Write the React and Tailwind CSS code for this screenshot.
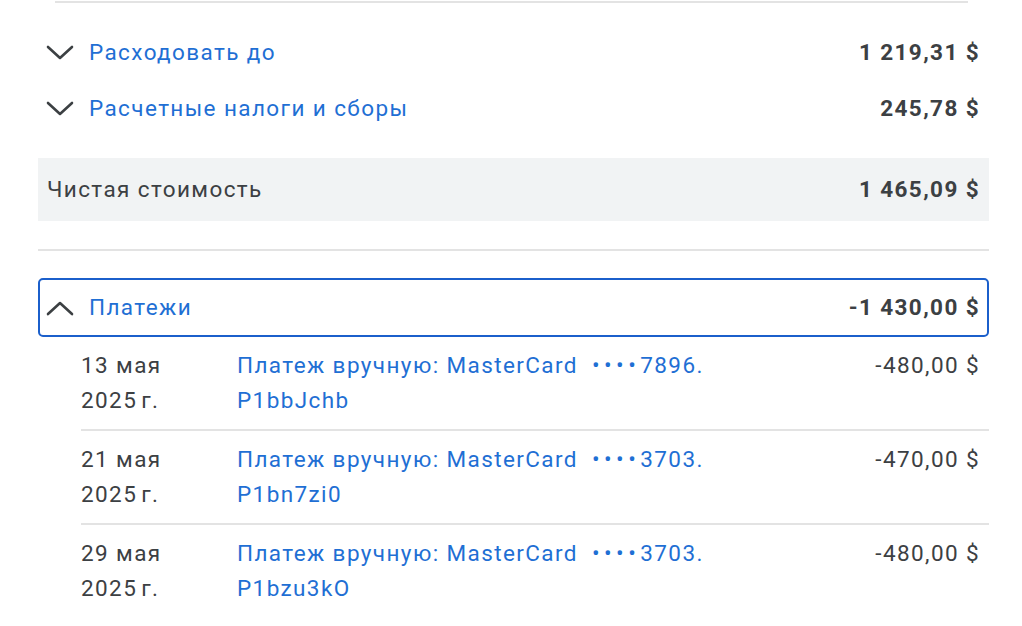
import React from 'react';

const Chevron = ({ up }) => (
  <svg width="28" height="16" viewBox="0 0 28 16" className="shrink-0 text-[#3c4043]">
    <polyline
      points={up ? '2,14 14,3 26,14' : '2,3 14,14 26,3'}
      fill="none"
      stroke="currentColor"
      strokeWidth="2.6"
      strokeLinecap="round"
      strokeLinejoin="round"
    />
  </svg>
);

const payments = [
  { day: '13 мая', card: '7896.', code: 'P1bbJchb', amount: '-480,00 $' },
  { day: '21 мая', card: '3703.', code: 'P1bn7zi0', amount: '-470,00 $' },
  { day: '29 мая', card: '3703.', code: 'P1bzu3kO', amount: '-480,00 $' },
];

function SummaryRow({ label, value }) {
  return (
    <div className="flex items-center h-[56px] pl-[8px] pr-[9px]">
      <Chevron />
      <span className="ml-[15px] text-[#1f6fd4]">{label}</span>
      <span className="ml-auto font-bold text-[#3c4043]">{value}</span>
    </div>
  );
}

export default function App() {
  return (
    <div
      className="w-full min-h-screen bg-white pl-[38px] pr-[33px] text-[22.5px] leading-[35px] tracking-[1.4px]"
      style={{ fontFamily: 'Roboto, "Noto Sans", sans-serif' }}
    >
      <div className="ml-[17px] mr-[21px] h-[2px] bg-[#e3e3e3] mt-[1px]" />

      <div className="pt-[21px]">
        <SummaryRow label="Расходовать до" value="1 219,31 $" />
        <SummaryRow label="Расчетные налоги и сборы" value="245,78 $" />
      </div>

      <div className="mt-[22px] h-[63px] bg-[#f1f3f4] flex items-center pl-[9px] pr-[9px] text-[#3c4043]">
        <span>Чистая стоимость</span>
        <span className="ml-auto font-bold">1 465,09 $</span>
      </div>

      <div className="mt-[28px] h-[2px] bg-[#e3e3e3]" />

      <div className="mt-[27px] h-[59px] border-[2.5px] border-[#1b5fcb] rounded-[5px] flex items-center pl-[6px] pr-[7px]">
        <Chevron up />
        <span className="ml-[15px] text-[#1f6fd4]">Платежи</span>
        <span className="ml-auto font-bold text-[#3c4043]">-1 430,00 $</span>
      </div>

      <div className="ml-[43px]">
        {payments.map((p, i) => (
          <div key={i} className={i < payments.length - 1 ? 'border-b-2 border-[#e3e3e3]' : ''}>
            <div className="flex py-[11px] pr-[9px]">
              <div className="w-[156px] shrink-0 text-[#3c4043]">
                <div>{p.day}</div>
                <div>
                  2025<span className="ml-[4px]">г.</span>
                </div>
              </div>
              <div className="text-[#1f6fd4]">
                <div>
                  Платеж вручную: MasterCard{' '}
                  <span className="ml-[7px] tracking-[4.5px]">{'\u2022\u2022\u2022\u2022'}</span>
                  {p.card}
                </div>
                <div>{p.code}</div>
              </div>
              <div className="ml-auto text-[#3c4043]">{p.amount}</div>
            </div>
          </div>
        ))}
      </div>
    </div>
  );
}
